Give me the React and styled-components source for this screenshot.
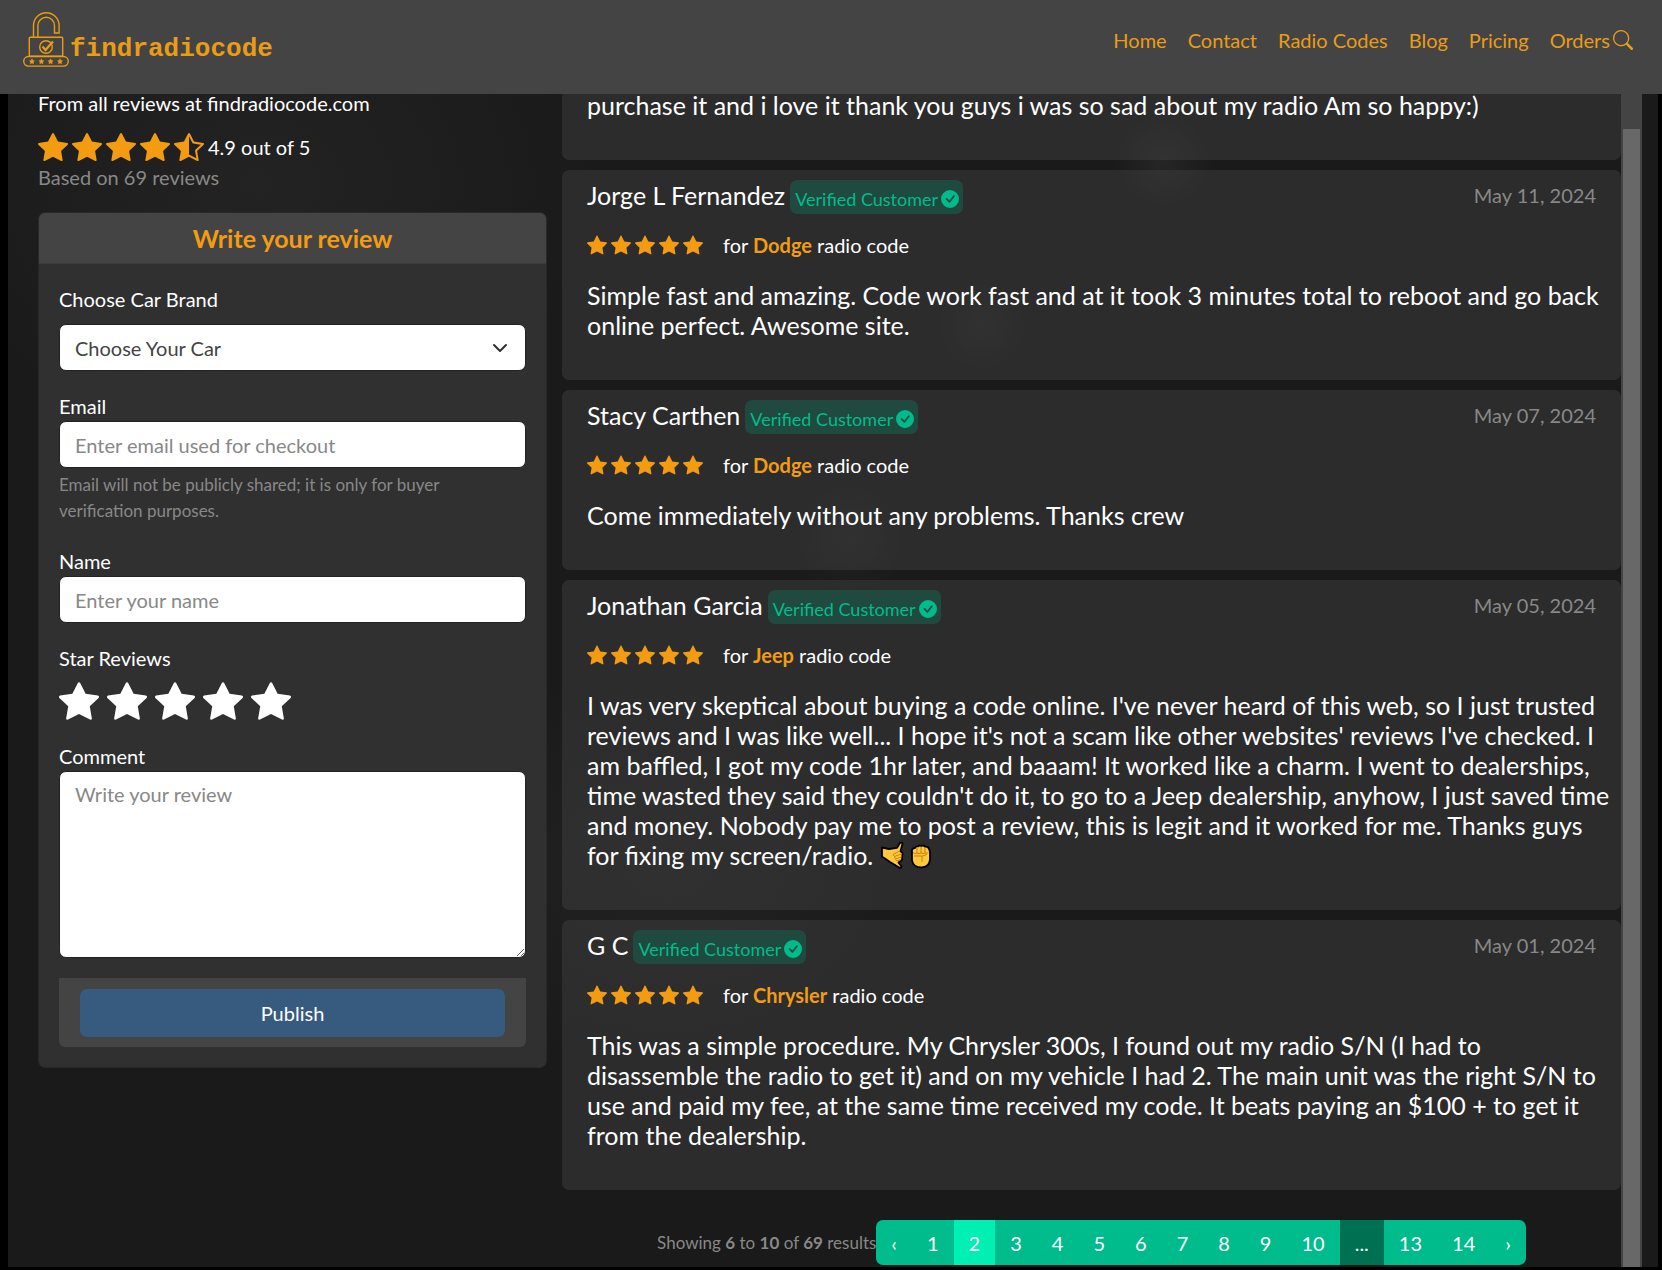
import React from 'react'
import styled, { createGlobalStyle } from 'styled-components'
import { BsCheckCircleFill, BsSearch, BsStarFill, BsStarHalf } from 'react-icons/bs'

const GlobalStyle = createGlobalStyle`
    * {
    box-sizing: border-box;
    }

    body {
    margin: 0;
    background-color: #000;
    color: #fff;
    font-family: Lato, sans-serif;
    font-size: 20px;
    line-height: 30px;
    }

    input, select, textarea, button {
    font: inherit;
    }
`

const Header = styled.header`
    position: sticky;
    top: 0;
    z-index: 1;
    display: flex;
    justify-content: space-between;
    align-items: flex-start;
    min-height: 94px;
    padding: 10px 29px 10px 22px;
    background-color: #444;
`

const Brand = styled.a`
    display: flex;
    align-items: flex-end;
    color: #e99c17;
    font-family: "Liberation Mono", monospace;
    font-size: 26px;
    font-weight: 700;
    line-height: 36px;
    text-decoration: none;
`

const Nav = styled.nav`
    display: flex;
    align-items: center;
    gap: 21px;
    padding-top: 15px;
`

const NavLink = styled.a`
    color: #e99c17;
    text-decoration: none;
`

const NavEnd = styled.div`
    display: flex;
    align-items: center;
    gap: 3px;
`

const SearchButton = styled.button`
    display: flex;
    padding: 0;
    border: none;
    background: none;
    color: #e99c17;
    cursor: pointer;
`

const Main = styled.main`
    display: grid;
    grid-template-columns: 1fr 2fr;
    min-height: calc(100vh - 93px);
    margin: -4px 4px 3px 8px;
    padding: 0 16px 0 14px;
    background-color: #1a1a1a;
    background-image:
    radial-gradient(circle at 70% 6%, #262626, transparent 50px),
    radial-gradient(circle at 59% 20%, #232323, transparent 50px),
    radial-gradient(circle at 51% 38%, #232323, transparent 60px),
    radial-gradient(ellipse at 15% 8%, #232323, transparent 340px),
    radial-gradient(ellipse at 40% 66%, #222, transparent 260px);
`

const Sidebar = styled.aside`
    padding: 0 15px 0 16px;
`

const Lead = styled.div`
    line-height: 26px;
`

const Score = styled.div`
    display: flex;
    align-items: center;
    gap: 4px;
    margin-top: 16px;
`

const Stars = styled.span`
    display: flex;
    gap: 4px;
    color: #f39c12;
`

const Muted = styled.div`
    color: #888;
`

const FormCard = styled.form`
    margin-top: 20px;
    border: 1px solid #282828;
    border-radius: 7px;
    background-color: #303030;
    overflow: hidden;
`

const FormTitle = styled.h2`
    margin: 0;
    padding: 10px 20px;
    border-bottom: 1px solid #3c3c3c;
    background-color: #444;
    color: #f39c12;
    font-size: 25px;
    font-weight: 700;
    line-height: 30px;
    text-align: center;
`

const FormBody = styled.div`
    display: flex;
    flex-direction: column;
    gap: 20px;
    padding: 20px;
`

const Field = styled.div`
    display: flex;
    flex-direction: column;
`

const Label = styled.label`
    margin-bottom: ${({ $spaced }) => ($spaced ? 10 : 0)}px;
`

const Input = styled.input`
    width: 100%;
    height: 47px;
    padding: 7px 15px;
    border: 1px solid #222;
    border-radius: 7px;
    background-color: #fff;
    color: #444;

    &::placeholder {
    color: #888;
    opacity: 1;
    }
`

const Select = styled(Input)`
    appearance: none;
    background-image: url("data:image/svg+xml,%3csvg xmlns='http://www.w3.org/2000/svg' viewBox='0 0 16 16'%3e%3cpath fill='none' stroke='%23303030' stroke-linecap='round' stroke-linejoin='round' stroke-width='2' d='m2 5 6 6 6-6'/%3e%3c/svg%3e");
    background-repeat: no-repeat;
    background-position: right 17px center;
    background-size: 16px 16px;
`

const TextArea = styled(Input)`
    display: block;
    height: 187px;
    resize: vertical;
`

const Help = styled.small`
    padding: 4px 0 2px;
    color: #888;
    font-size: 17px;
    line-height: 26px;
`

const Rating = styled.fieldset`
    margin: 0;
    padding: 0;
    border: none;
`

const Legend = styled.legend`
    padding: 0;
`

const RatingStars = styled.div`
    display: flex;
    gap: 8px;
    padding-top: 8px;
`

const RatingStar = styled.label`
    display: flex;
    cursor: pointer;
`

const RatingInput = styled.input`
    appearance: none;
    width: 0;
    height: 0;
    margin: 0;
`

const FormFooter = styled.div`
    padding: 11px 21px 10px;
    border-radius: 0 0 6px 6px;
    background-color: #444;
`

const PublishButton = styled.button`
    display: block;
    width: 100%;
    height: 48px;
    border: none;
    border-radius: 7px;
    background-color: #375a7f;
    color: #fff;
    cursor: pointer;
`

const ReviewsPanel = styled.div`
    display: flex;
`

const Reviews = styled.section`
    display: flex;
    flex: 1;
    flex-direction: column;
    gap: 10px;
    min-width: 0;
`

const ReviewCard = styled.article`
    padding: ${({ $cut }) => ($cut ? 0 : 10)}px 25px 40px;
    border-radius: 7px;
    background-color: rgba(68, 68, 68, 0.42);
`

const ReviewHeader = styled.div`
    display: flex;
    justify-content: space-between;
    align-items: flex-start;
`

const Customer = styled.div`
    display: flex;
    gap: 5px;
`

const CustomerName = styled.h3`
    margin: 0;
    font-size: 25px;
    font-weight: 400;
    line-height: 30px;
`

const Badge = styled.span`
    display: flex;
    align-items: center;
    gap: 3px;
    height: 34px;
    padding: 3px 4px 0 5px;
    border-radius: 7px;
    background-color: #20493f;
    color: #00bc8c;
    font-size: 18px;
    line-height: 26px;
`

const ReviewMeta = styled.div`
    display: flex;
    align-items: center;
    gap: 20px;
    margin: 16px 0 20px;
`

const CarBrand = styled.strong`
    color: #f39c12;
    font-weight: 700;
`

const Comment = styled.p`
    margin: 0 -15px 0 0;
    font-size: 25px;
    line-height: 30px;

    svg {
    margin-right: 2px;
    vertical-align: -4px;
    }
`

const PagerRow = styled.div`
    display: flex;
    justify-content: center;
    align-items: center;
    margin-top: 20px;
    padding-bottom: 2px;
`

const PagerInfo = styled(Muted)`
    font-size: 17px;
`

const Pager = styled.nav`
    display: flex;
    border-radius: 7px;
    overflow: hidden;
`

const PageLink = styled.a`
    padding: 8px 15px 7px;
    background-color: ${({ $state }) =>
        $state === 'active' ? '#00efb2' : $state === 'disabled' ? '#007053' : '#00bc8c'};
    color: #fff;
    text-decoration: none;
`

const Track = styled.div`
    display: flex;
    width: 21px;
    padding: 39px 2px 0;
    background-color: #444;
`

const Thumb = styled.div`
    flex: 1;
    background-color: #686868;
`

const reviews = [
    {
        name: 'Jorge L Fernandez',
        date: 'May 11, 2024',
        brand: 'Dodge',
        comment: 'Simple fast and amazing. Code work fast and at it took 3 minutes total to reboot and go back online perfect. Awesome site.',
    },
    {
        name: 'Stacy Carthen',
        date: 'May 07, 2024',
        brand: 'Dodge',
        comment: 'Come immediately without any problems. Thanks crew',
    },
    {
        name: 'Jonathan Garcia',
        date: 'May 05, 2024',
        brand: 'Jeep',
        comment: "I was very skeptical about buying a code online. I've never heard of this web, so I just trusted reviews and I was like well... I hope it's not a scam like other websites' reviews I've checked. I am baffled, I got my code 1hr later, and baaam! It worked like a charm. I went to dealerships, time wasted they said they couldn't do it, to go to a Jeep dealership, anyhow, I just saved time and money. Nobody pay me to post a review, this is legit and it worked for me. Thanks guys for fixing my screen/radio. ",
        hands: true,
    },
    {
        name: 'G C',
        date: 'May 01, 2024',
        brand: 'Chrysler',
        comment: 'This was a simple procedure. My Chrysler 300s, I found out my radio S/N (I had to disassemble the radio to get it) and on my vehicle I had 2. The main unit was the right S/N to use and paid my fee, at the same time received my code. It beats paying an $100 + to get it from the dealership.',
    },
]

const pages = ['‹', '1', '2', '3', '4', '5', '6', '7', '8', '9', '10', '...', '13', '14', '›']
const links = ['Home', 'Contact', 'Radio Codes', 'Blog', 'Pricing']
const five = [1, 2, 3, 4, 5]

const pageState = (page) => {
    if (page === '2') return 'active'
    if (page === '...') return 'disabled'
    return 'normal'
}

const LogoIcon = () => (
    <svg width="48" height="57" viewBox="0 0 48 57" fill="none" stroke="#e99c17" strokeWidth="1.4" aria-hidden="true">
        <path d="M11.5 27V15.500a12.800 12.800 0 0 1 25.600 0V23H32.500V15.500a8.300 8.300 0 0 0-16.600 0V27" />
        <rect x="7.300" y="27.300" width="33.400" height="19" rx="1" />
        <circle cx="24" cy="37" r="6.300" />
        <path d="M20.500 36.500l3 3.500 7.500-8.500" strokeWidth="2.200" />
        <rect x="1.700" y="46.500" width="44.600" height="9.600" rx="4.800" />
        {[10, 19.400, 28.600, 38].map((x) => (
            <path
                key={x}
                d={`M${x} 48.800l.8 1.700 1.700.2-1.200 1.300.3 1.800-1.600-.9-1.600.9.3-1.800-1.200-1.300 1.700-.2z`}
                fill="#e99c17"
                strokeWidth=".5"
            />
        ))}
    </svg>
)

const CallMeHand = () => (
    <svg width="26" height="28" viewBox="0 0 26 28" role="img" aria-label="Call me hand">
        <path
            d="M2 6.500l7 1.500 8-1.200L20 2q1.800-1 2.600.6L20.500 10l2 2-.5 7-3.500 2.500 3 4q-.3 1.800-2 1.200L10 21 2 15.500z"
            fill="#ffc83d"
            stroke="#000"
            strokeWidth="1.800"
            strokeLinejoin="round"
        />
        <path d="M20 10l-7 3.500 1.500 2 7-2.500M14.500 16l1 2 6-2M15.500 18.500l1.500 1.500 4-1.500" fill="none" stroke="#d67d00" strokeWidth="1" />
    </svg>
)

const RaisedFist = () => (
    <svg width="26" height="28" viewBox="0 0 26 28" role="img" aria-label="Raised fist">
        <path
            d="M4 11V9q.5-2 3-2 .5-1.800 3-1.600 1.500-1.600 3.500-.4 2-1.200 3.500.6 3.500-.4 4 2.400l1 2.500V19q-1 7-8.500 7.500Q5 26.500 4 19z"
            fill="#ffc83d"
            stroke="#000"
            strokeWidth="1.800"
            strokeLinejoin="round"
        />
        <path d="M9 7v5M13 6v6M17 7v5M5 11.500q1.500 2 4 .5 2 1.200 4 0 2 1.200 4 0 2.500 1 3.500-1M6 15h8v6M14 15q3 0 5-2" fill="none" stroke="#d67d00" strokeWidth="1" />
    </svg>
)

const ReviewForm = () => (
    <FormCard>
        <FormTitle>Write your review</FormTitle>
        <FormBody>
            <Field>
                <Label htmlFor="brand" $spaced>Choose Car Brand</Label>
                <Select as="select" id="brand">
                    <option>Choose Your Car</option>
                </Select>
            </Field>
            <Field>
                <Label htmlFor="email">Email</Label>
                <Input id="email" type="email" placeholder="Enter email used for checkout" />
                <Help>Email will not be publicly shared; it is only for buyer verification purposes.</Help>
            </Field>
            <Field>
                <Label htmlFor="name">Name</Label>
                <Input id="name" type="text" placeholder="Enter your name" />
            </Field>
            <Rating>
                <Legend>Star Reviews</Legend>
                <RatingStars>
                    {five.map((n) => (
                        <RatingStar key={n} htmlFor={`star-${n}`}>
                            <RatingInput type="radio" name="rating" id={`star-${n}`} value={n} aria-label={`${n} stars`} />
                            <BsStarFill size={40} />
                        </RatingStar>
                    ))}
                </RatingStars>
            </Rating>
            <Field>
                <Label htmlFor="comment">Comment</Label>
                <TextArea as="textarea" id="comment" placeholder="Write your review" />
            </Field>
            <FormFooter>
                <PublishButton type="button">Publish</PublishButton>
            </FormFooter>
        </FormBody>
    </FormCard>
)

const Review = ({ name, date, brand, comment, hands }) => (
    <ReviewCard>
        <ReviewHeader>
            <Customer>
                <CustomerName>{name}</CustomerName>
                <Badge>
                    Verified Customer
                    <BsCheckCircleFill size={18} />
                </Badge>
            </Customer>
            <Muted>{date}</Muted>
        </ReviewHeader>
        <ReviewMeta>
            <Stars>
                {five.map((n) => <BsStarFill key={n} size={20} />)}
            </Stars>
            <span>for <CarBrand>{brand}</CarBrand> radio code</span>
        </ReviewMeta>
        <Comment>
            {comment}
            {hands && <><CallMeHand /><RaisedFist /></>}
        </Comment>
    </ReviewCard>
)

export default function App() {
    return (
        <>
            <GlobalStyle />
            <Header>
                <Brand href="#">
                    <LogoIcon />
                    findradiocode
                </Brand>
                <Nav>
                    {links.map((link) => <NavLink key={link} href="#">{link}</NavLink>)}
                    <NavEnd>
                        <NavLink href="#">Orders</NavLink>
                        <SearchButton type="button" aria-label="Search">
                            <BsSearch size={20} />
                        </SearchButton>
                    </NavEnd>
                </Nav>
            </Header>

            <Main>
                <Sidebar>
                    <Lead>From all reviews at findradiocode.com</Lead>
                    <Score>
                        <Stars>
                            {[1, 2, 3, 4].map((n) => <BsStarFill key={n} size={30} />)}
                            <BsStarHalf size={30} />
                        </Stars>
                        4.9 out of 5
                    </Score>
                    <Muted>Based on 69 reviews</Muted>
                    <ReviewForm />
                </Sidebar>

                <ReviewsPanel>
                    <Reviews>
                        <ReviewCard $cut>
                            <Comment>purchase it and i love it thank you guys i was so sad about my radio Am so happy:)</Comment>
                        </ReviewCard>
                        {reviews.map((review) => <Review key={review.name} {...review} />)}
                        <PagerRow>
                            <PagerInfo>
                                Showing <strong>6</strong> to <strong>10</strong> of <strong>69</strong> results
                            </PagerInfo>
                            <Pager aria-label="Pages">
                                {pages.map((page) => (
                                    <PageLink key={page} href="#" $state={pageState(page)}>{page}</PageLink>
                                ))}
                            </Pager>
                        </PagerRow>
                    </Reviews>
                    <Track>
                        <Thumb />
                    </Track>
                </ReviewsPanel>
            </Main>
        </>
    )
}
